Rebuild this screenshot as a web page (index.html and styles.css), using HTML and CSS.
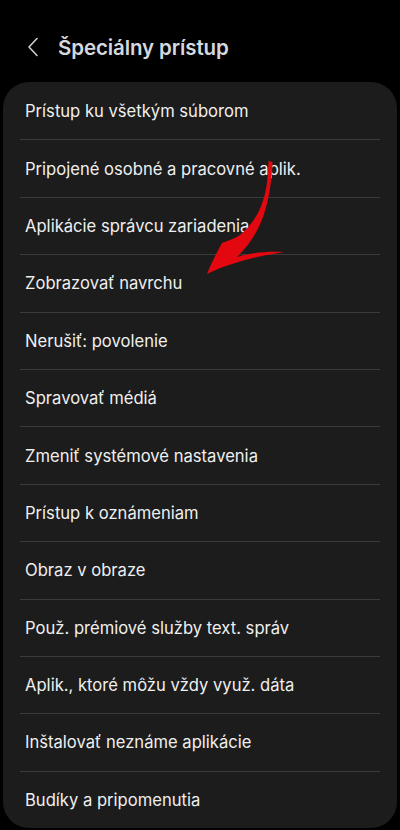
FILE: index.html
```
<!DOCTYPE html>
<html lang="sk">
<head>
<meta charset="utf-8">
<link rel="stylesheet" href="styles.css">
</head>
<body>
<div class="screen">
  <header class="topbar">
    <svg class="back" viewBox="0 0 12 20" width="12" height="20"><path d="M10 1.5 L2 10 L10 18.5" fill="none" stroke="#cfcfcf" stroke-width="1.6" stroke-linecap="round" stroke-linejoin="round"/></svg>
    <h1 class="title">Špeciálny prístup</h1>
  </header>
  <ul class="card">
    <li class="row">Prístup ku všetkým súborom</li>
    <li class="row">Pripojené osobné a pracovné aplik.</li>
    <li class="row">Aplikácie správcu zariadenia</li>
    <li class="row">Zobrazovať navrchu</li>
    <li class="row">Nerušiť: povolenie</li>
    <li class="row">Spravovať médiá</li>
    <li class="row">Zmeniť systémové nastavenia</li>
    <li class="row">Prístup k oznámeniam</li>
    <li class="row">Obraz v obraze</li>
    <li class="row">Použ. prémiové služby text. správ</li>
    <li class="row">Aplik., ktoré môžu vždy využ. dáta</li>
    <li class="row">Inštalovať neznáme aplikácie</li>
    <li class="row">Budíky a pripomenutia</li>
  </ul>
  <svg class="arrow" viewBox="0 0 400 830" width="400" height="830">
    <path d="M268.5 161 C268 198 259 219 240 235 C234 239 227 241 222 243 C216 254 211 264 207 274 C228 264 252 257 284 252 C266 251 250 253 237 257 C256 238 270 215 272.5 162 Z" fill="#e3070f"/>
  </svg>
</div>
</body>
</html>
```
FILE: styles.css
```
html, body {
  margin: 0;
  padding: 0;
  background: #000;
}
body {
  font-family: Inter, Roboto, "Noto Sans", sans-serif;
  width: 400px;
  height: 830px;
  overflow: hidden;
}
.screen {
  position: relative;
  width: 400px;
  height: 830px;
}
.topbar {
  height: 82px;
  display: flex;
  align-items: center;
  padding: 12px 0 0 27px;
  box-sizing: border-box;
  gap: 19px;
}
.back {
  display: block;
}
.title {
  margin: 0;
  font-size: 20.5px;
  font-weight: 600;
  color: #d6d8df;
  letter-spacing: -0.1px;
}
.card {
  list-style: none;
  margin: 0 3px;
  padding: 0;
  background: #1c1c1c;
  border-radius: 26px;
  overflow: hidden;
}
.row {
  height: 57.4px;
  box-sizing: border-box;
  display: flex;
  align-items: center;
  padding: 1px 0 0 22px;
  font-size: 16.6px;
  color: #efefef;
  position: relative;
}
.row + .row::before {
  content: "";
  position: absolute;
  top: 0;
  left: 17px;
  right: 17px;
  height: 1px;
  background: #3a3a3a;
}
.arrow {
  position: absolute;
  left: 0;
  top: 0;
  pointer-events: none;
}
```
